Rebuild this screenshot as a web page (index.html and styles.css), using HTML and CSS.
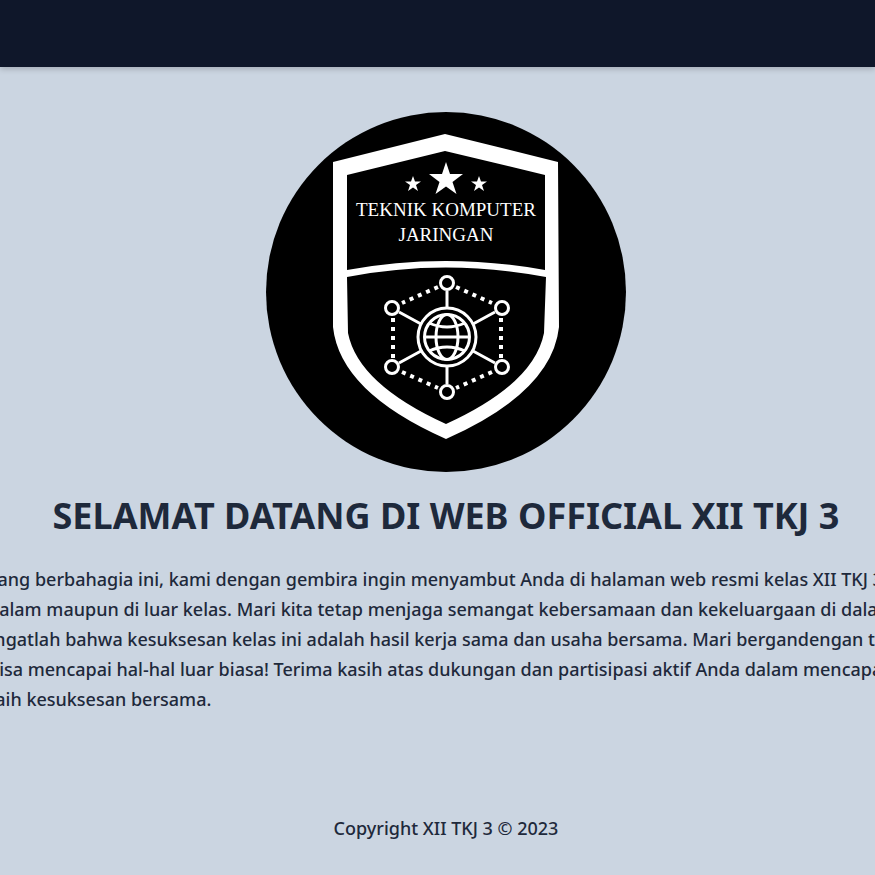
FILE: index.html
```html
<!DOCTYPE html>
<html lang="en">
<head>
    <meta charset="UTF-8">
    <title>XII TKJ 3</title>
    <link rel="stylesheet" href="styles.css">
</head>
<body>
    <header class="topbar"></header>
    <main class="home">
        <svg class="logo" width="360" height="360" viewBox="266 112 360 360">
            <circle cx="446" cy="292" r="180" fill="#000"/>
            <!-- shield -->
            <path class="shield" fill-rule="evenodd" d="M445 134 L558 162 L559 327 Q552 392 446 439 Q340 392 333 327 L333 162 Z M445 151 L347 175 L347 270 Q445 252 545 270 L545 175 Z M347 277 L348 333 Q358 384 446 424 Q534 384 544 333 L546 277 Q445 258 347 277 Z"/>
            <polygon class="star" points="446,162 450,174 463,174 452.500,182 456.500,194 446,186.500 435.500,194 439.500,182 429,174 442,174"/>
            <polygon class="star" points="413,176 415,181.500 421,181.500 416,185 418,191 413,187.500 408,191 410,185 405,181.500 411,181.500"/>
            <polygon class="star" points="479,176 481,181.500 487,181.500 482,185 484,191 479,187.500 474,191 476,185 471,181.500 477,181.500"/>
            <text class="logo-text" x="446" y="216">TEKNIK KOMPUTER</text>
            <text class="logo-text" x="446" y="241">JARINGAN</text>
            <!-- network -->
            <g class="net">
                <path d="M447 291 V308 M447 366 V384 M399 312 L421 324 M495 312 L473 324 M399 363 L421 351 M495 363 L473 351"/>
                <circle cx="447" cy="283" r="6.500"/>
                <circle cx="447" cy="392" r="6.500"/>
                <circle cx="392" cy="308" r="6.500"/>
                <circle cx="502" cy="308" r="6.500"/>
                <circle cx="392" cy="367" r="6.500"/>
                <circle cx="502" cy="367" r="6.500"/>
                <circle cx="447" cy="337" r="29"/>
                <circle cx="447" cy="337" r="22.500"/>
                <ellipse cx="447" cy="337" rx="11" ry="22.500"/>
                <path d="M429 323 Q447 331 465 323 M429 351 Q447 343 465 351 M424.500 337 H469.500"/>
            </g>
            <path class="net-dots" d="M438 287 L402 303 M456 287 L492 303 M393 318 V358 M501 318 V358 M402 372 L438 388 M492 372 L456 388"/>
        </svg>
        <h1 class="home-title">SELAMAT DATANG DI WEB OFFICIAL XII TKJ 3</h1>
        <p class="home-text">
            yang berbahagia ini, kami dengan gembira ingin menyambut Anda di halaman web resmi kelas XII TKJ 3<br>
            dalam maupun di luar kelas. Mari kita tetap menjaga semangat kebersamaan dan kekeluargaan di dalam kelas<br>
            Ingatlah bahwa kesuksesan kelas ini adalah hasil kerja sama dan usaha bersama. Mari bergandengan tangan<br>
            bisa mencapai hal-hal luar biasa! Terima kasih atas dukungan dan partisipasi aktif Anda dalam mencapai<br>
            raih kesuksesan bersama.
        </p>
        <footer class="home-footer">Copyright XII TKJ 3 © 2023</footer>
    </main>
</body>
</html>
```
FILE: styles.css
```css
* {
    margin: 0;
    padding: 0;
    box-sizing: border-box;
}
html, body {
    overflow: hidden;
}
body {
    height: 875px;
    background-color: #cbd5e1;
    color: #1e293b;
    font-family: "Noto Sans", "Open Sans", sans-serif;
}
.topbar {
    height: 67px;
    background-color: #0f172a;
    box-shadow: 0 2px 6px rgba(0, 0, 0, 0.2);
}
.home {
    width: 892px;
    display: flex;
    flex-direction: column;
    align-items: center;
    padding-top: 45px;
}
.logo {
    display: block;
    flex: none;
}
.shield {
    fill: #fff;
}
.star {
    fill: #fff;
}
.logo-text {
    fill: #fff;
    font-family: "Liberation Serif", serif;
    font-size: 19px;
    text-anchor: middle;
}
.net {
    fill: none;
    stroke: #fff;
    stroke-width: 3;
}
.net-dots {
    fill: none;
    stroke: #fff;
    stroke-width: 4;
    stroke-dasharray: 4 5;
}
.home-title {
    margin-top: 20px;
    font-size: 36px;
    line-height: 48px;
    font-weight: 700;
    white-space: nowrap;
}
.home-text {
    align-self: flex-start;
    margin: 24px 0 0 -12px;
    font-size: 18px;
    line-height: 30px;
    font-weight: 500;
    white-space: nowrap;
}
.home-footer {
    margin-top: 100px;
    font-size: 18px;
    line-height: 28px;
    font-weight: 500;
}
```
